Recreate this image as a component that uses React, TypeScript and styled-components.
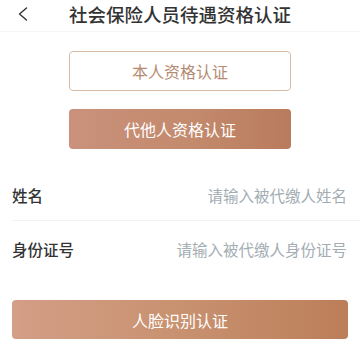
import styled, { createGlobalStyle } from "styled-components";

const GlobalStyle = createGlobalStyle`
  body {
    margin: 0;
    background: #ffffff;
    font-family: "Noto Sans CJK SC", "Noto Sans", sans-serif;
  }
`;

const Page = styled.div`
  width: 360px;
  height: 360px;
  overflow: hidden;
  background: #fff;
`;

const Header = styled.div`
  position: relative;
  height: 31px;
  display: flex;
  align-items: center;
  justify-content: center;
  border-bottom: 1px solid #f2f4f5;
`;

const BackButton = styled.div`
  position: absolute;
  left: 17px;
  top: 7px;
  width: 12px;
  height: 14px;
  display: flex;
  align-items: center;
  justify-content: center;
`;

const Title = styled.h1`
  margin: 0;
  font-size: 18.5px;
  font-weight: 500;
  color: #333;
  line-height: 26px;
  margin-top: -4px;
`;

const Choices = styled.div`
  display: flex;
  flex-direction: column;
  align-items: center;
  gap: 18px;
  padding-top: 19px;
`;

const ChoiceButton = styled.button<{ filled?: boolean }>`
  width: 222px;
  height: 40px;
  border-radius: 4px;
  font-family: inherit;
  font-size: 16px;
  display: flex;
  align-items: center;
  justify-content: center;
  ${(p) =>
    p.filled
      ? `
    border: none;
    color: #fff;
    background: linear-gradient(90deg, #ca917c 0%, #c38a6d 55%, #b97b5c 100%);
  `
      : `
    border: 1.5px solid #d9bca6;
    color: #b58a72;
    background: #fff;
  `}
`;

const Form = styled.div`
  margin-top: 21px;
  padding-left: 12px;
`;

const Row = styled.div<{ h: number; divider?: boolean }>`
  height: ${(p) => p.h}px;
  display: flex;
  align-items: center;
  justify-content: space-between;
  padding-right: 13px;
  border-bottom: ${(p) => (p.divider ? "1px solid #f1f3f4" : "none")};
`;

const Label = styled.span`
  font-size: 15.5px;
  color: #333;
  font-weight: 500;
`;

const Placeholder = styled.span`
  font-size: 15.5px;
  color: #a3adb3;
`;

const Footer = styled.div`
  padding: 23px 12px 0;
`;

const SubmitButton = styled.button`
  width: 100%;
  height: 39px;
  border: none;
  border-radius: 4px;
  font-family: inherit;
  font-size: 16px;
  color: #fff;
  background: linear-gradient(90deg, #d49e87 0%, #c99372 45%, #bc7e59 100%);
`;

export default function App() {
  return (
    <Page>
      <GlobalStyle />
      <Header>
        <BackButton>
          <svg width="10" height="14" viewBox="0 0 10 14" fill="none">
            <path d="M8.5 1L1.5 7l7 6" stroke="#333" strokeWidth="1.4" strokeLinecap="round" strokeLinejoin="round" />
          </svg>
        </BackButton>
        <Title>社会保险人员待遇资格认证</Title>
      </Header>
      <Choices>
        <ChoiceButton>本人资格认证</ChoiceButton>
        <ChoiceButton filled>代他人资格认证</ChoiceButton>
      </Choices>
      <Form>
        <Row h={50} divider>
          <Label>姓名</Label>
          <Placeholder>请输入被代缴人姓名</Placeholder>
        </Row>
        <Row h={56}>
          <Label>身份证号</Label>
          <Placeholder>请输入被代缴人身份证号</Placeholder>
        </Row>
      </Form>
      <Footer>
        <SubmitButton>人脸识别认证</SubmitButton>
      </Footer>
    </Page>
  );
}
